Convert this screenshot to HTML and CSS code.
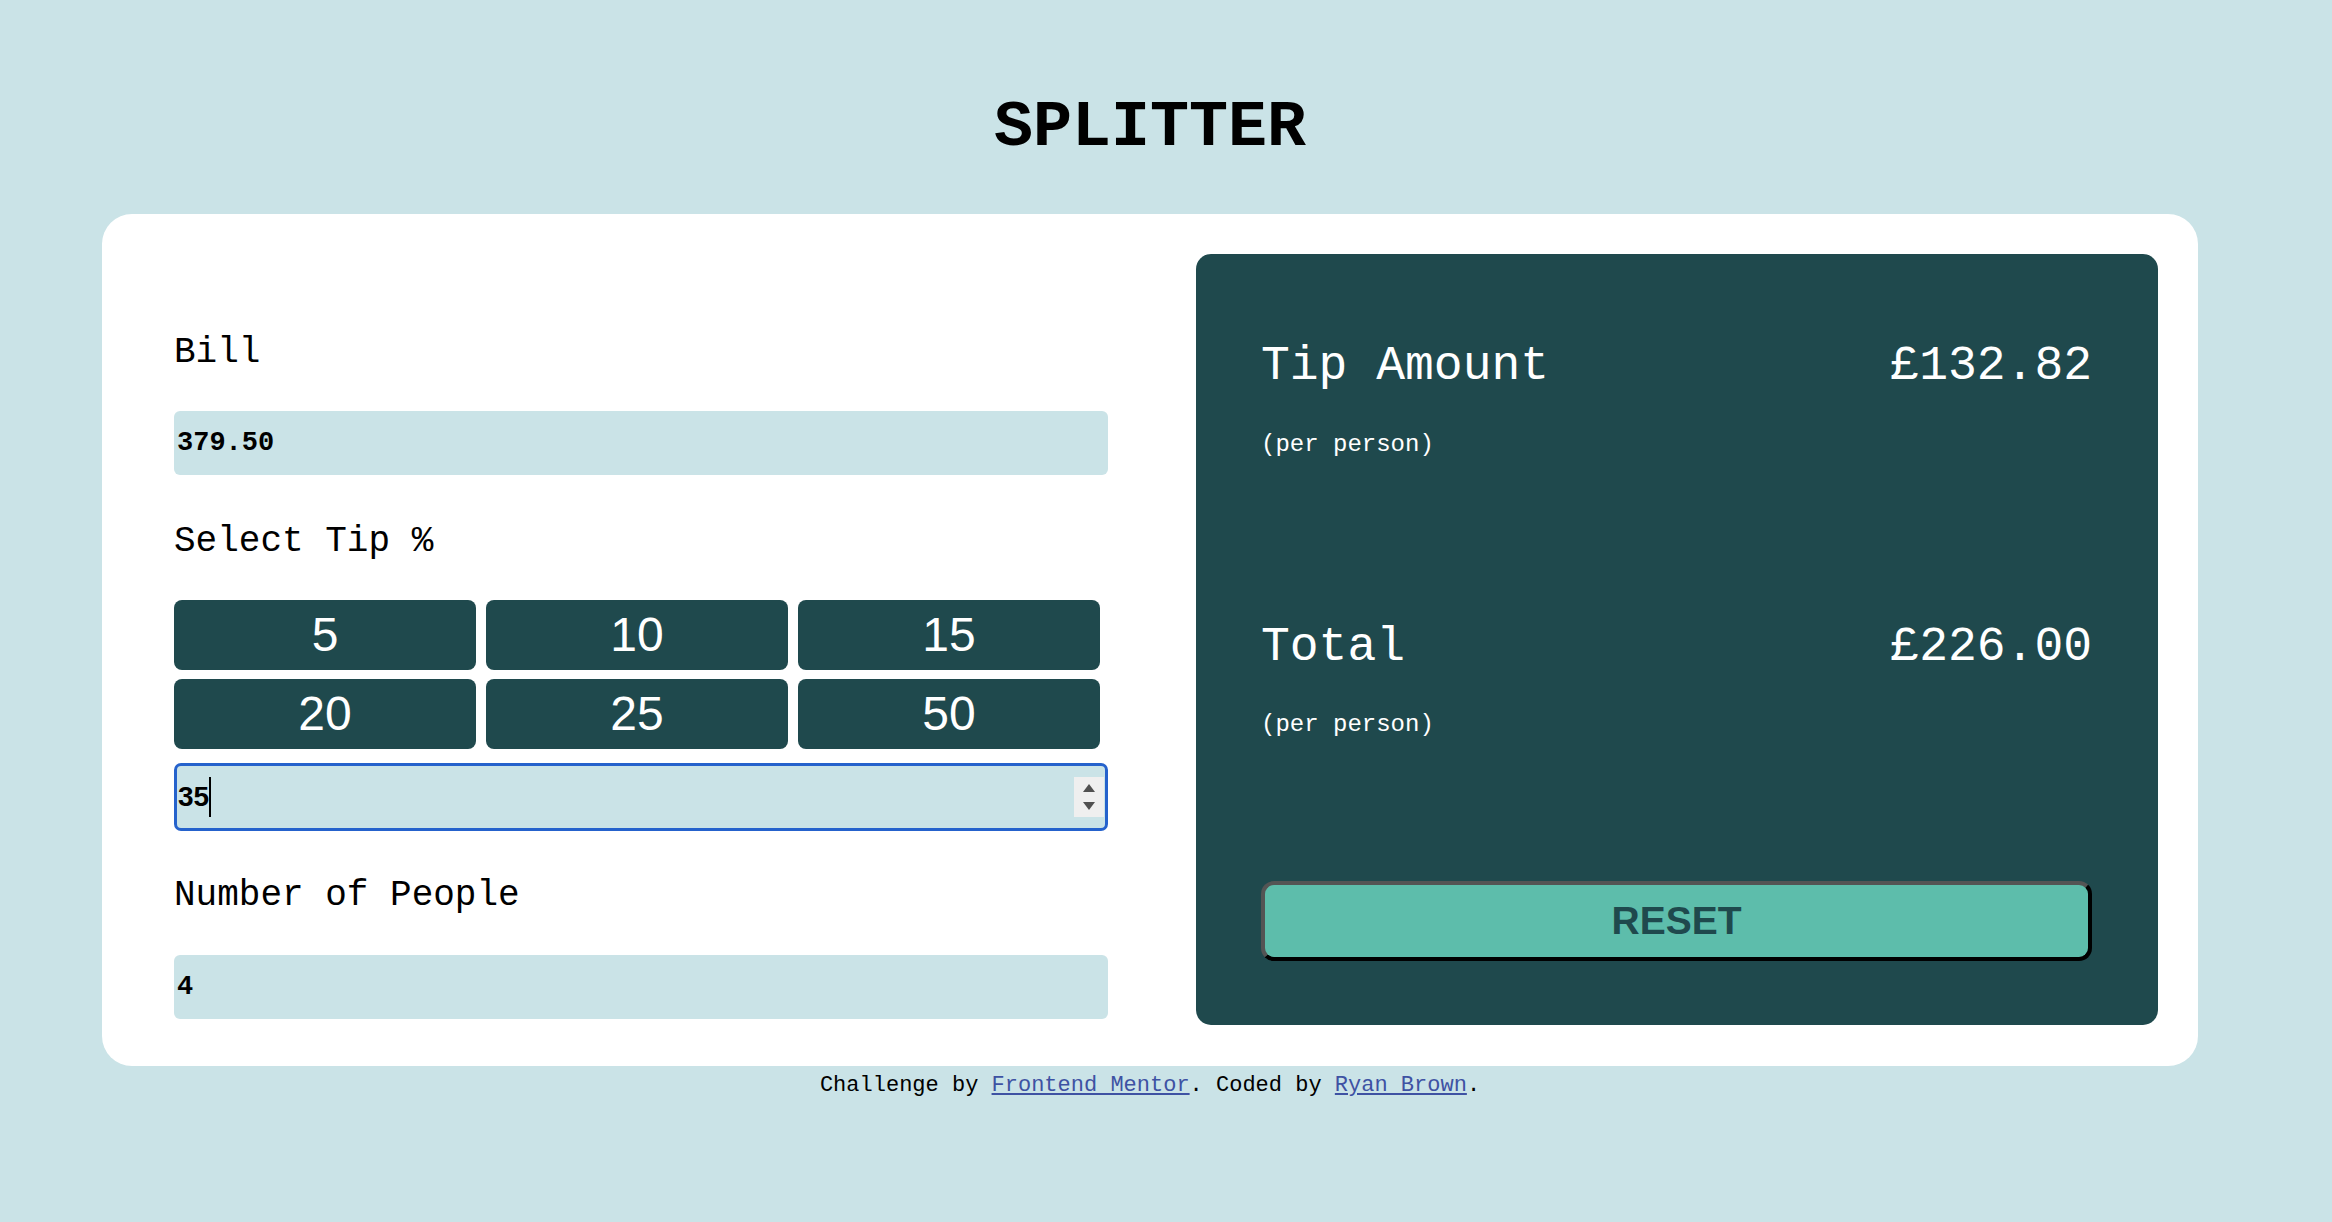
FILE: index.html
```html
<!DOCTYPE html>
<html lang="en">
<head>
<meta charset="utf-8">
<title>Splitter</title>
<link rel="stylesheet" href="styles.css">
</head>
<body>
<div class="page">
  <h1 class="title">SPLITTER</h1>
  <main class="card">
    <section class="inputs">
      <label class="label label-bill" for="bill">Bill</label>
      <input class="field field-bill" id="bill" type="text" value="379.50">
      <div class="label label-tip">Select Tip %</div>
      <div class="tips">
        <button class="tip">5</button>
        <button class="tip">10</button>
        <button class="tip">15</button>
        <button class="tip">20</button>
        <button class="tip">25</button>
        <button class="tip">50</button>
      </div>
      <div class="custom">
        <span class="custom-value">35</span><span class="caret"></span>
        <span class="spinner">
          <svg width="30" height="40" viewBox="0 0 30 40">
            <rect width="30" height="40" fill="#efefef"/>
            <path d="M9 15 L15 7 L21 15 Z" fill="#505050"/>
            <path d="M9 25 L15 33 L21 25 Z" fill="#505050"/>
          </svg>
        </span>
      </div>
      <label class="label label-people" for="people">Number of People</label>
      <input class="field field-people" id="people" type="text" value="4">
    </section>
    <section class="results">
      <div class="row row-tip">
        <span class="row-name">Tip Amount</span>
        <span class="row-value">£132.82</span>
      </div>
      <div class="per per-tip">(per person)</div>
      <div class="row row-total">
        <span class="row-name">Total</span>
        <span class="row-value">£226.00</span>
      </div>
      <div class="per per-total">(per person)</div>
      <button class="reset">RESET</button>
    </section>
  </main>
  <footer class="attribution">
    Challenge by <a href="#">Frontend Mentor</a>. Coded by <a href="#">Ryan Brown</a>.
  </footer>
</div>
</body>
</html>
```
FILE: styles.css
```css
* {
  box-sizing: border-box;
}

html, body {
  margin: 0;
  padding: 0;
  background: #cae3e7;
}

body {
  font-family: "Liberation Mono", "DejaVu Sans Mono", monospace;
  color: #000;
}

.page {
  width: 2300px;
  padding-top: 95px;
  padding-bottom: 40px;
}

.title {
  margin: 0;
  text-align: center;
  font-size: 65px;
  line-height: 66px;
  font-weight: 700;
  letter-spacing: 0;
}

.card {
  margin: 53px 102px 0;
  background: #fff;
  border-radius: 30px;
  padding: 40px 40px 41px 72px;
  display: flex;
  gap: 88px;
  align-items: flex-start;
}

.inputs {
  width: 934px;
  display: flex;
  flex-direction: column;
  padding-bottom: 5px;
}

.label {
  display: block;
  font-size: 36px;
  line-height: 54px;
  height: 54px;
}

.label-bill {
  margin-top: 72px;
}

.label-tip {
  margin-top: 40px;
}

.label-people {
  margin-top: 38px;
}

.field {
  display: block;
  width: 934px;
  height: 64px;
  margin: 31px 0 0;
  border: none;
  border-radius: 6px;
  background: #cae3e7;
  padding: 0 0 0 3px;
  font-family: "Liberation Mono", "DejaVu Sans Mono", monospace;
  font-weight: 700;
  font-size: 27px;
  color: #000;
  outline: none;
}

.field-people {
  margin-top: 32px;
}

.tips {
  margin-top: 31px;
  display: grid;
  grid-template-columns: repeat(3, 302px);
  grid-auto-rows: 70px;
  column-gap: 10px;
  row-gap: 9px;
}

.tip {
  border: none;
  border-radius: 8px;
  background: #1f494d;
  color: #fff;
  font-family: "Liberation Sans", Arial, sans-serif;
  font-size: 48px;
  line-height: 1;
  padding: 0;
}

.custom {
  position: relative;
  margin-top: 14px;
  height: 68px;
  width: 934px;
  border: 3px solid #2562cc;
  border-radius: 7px;
  background: #cae3e7;
  display: flex;
  align-items: center;
  padding-left: 1px;
}

.custom-value {
  font-family: "Liberation Sans", Arial, sans-serif;
  font-weight: 700;
  font-size: 28px;
  line-height: 40px;
}

.caret {
  display: inline-block;
  width: 2px;
  height: 40px;
  background: #000;
}

.spinner {
  position: absolute;
  right: 1px;
  top: 11px;
  width: 30px;
  height: 40px;
  display: block;
}

.spinner svg {
  display: block;
}

.results {
  width: 962px;
  height: 771px;
  background: #1f494d;
  border-radius: 15px;
  padding: 0 66px 0 65px;
  display: flex;
  flex-direction: column;
  color: #fff;
}

.row {
  display: flex;
  justify-content: space-between;
  font-size: 48px;
  line-height: 58px;
  height: 58px;
}

.row-tip {
  margin-top: 83px;
}

.row-total {
  margin-top: 155px;
}

.per {
  font-size: 24px;
  line-height: 36px;
  height: 36px;
}

.per-tip {
  margin-top: 32px;
}

.per-total {
  margin-top: 31px;
}

.reset {
  margin-top: 138px;
  height: 80px;
  width: 831px;
  background: #5dbdab;
  color: #1f494d;
  font-family: "Liberation Sans", Arial, sans-serif;
  font-weight: 700;
  font-size: 39px;
  border-width: 4px;
  border-style: solid;
  border-color: #545454 #000 #000 #545454;
  border-radius: 13px;
  padding: 0;
}

.attribution {
  margin-top: 7px;
  text-align: center;
  font-size: 22px;
  line-height: 26px;
}

.attribution a {
  color: #3e52a3;
}
```
